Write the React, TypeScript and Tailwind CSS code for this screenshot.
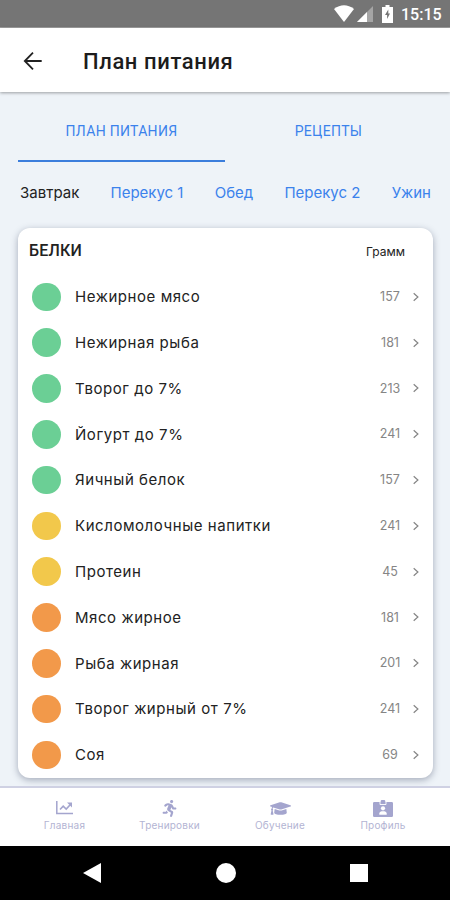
import type { ReactNode } from 'react'
import { FaGraduationCap, FaRunning } from 'react-icons/fa'

interface Food {
  name: string
  grams: number
  color: string
}

const GREEN = 'bg-[#6bcf95]'
const YELLOW = 'bg-[#f2c84b]'
const ORANGE = 'bg-[#f2994a]'

const foods: Food[] = [
  { name: 'Нежирное мясо', grams: 157, color: GREEN },
  { name: 'Нежирная рыба', grams: 181, color: GREEN },
  { name: 'Творог до 7%', grams: 213, color: GREEN },
  { name: 'Йогурт до 7%', grams: 241, color: GREEN },
  { name: 'Яичный белок', grams: 157, color: GREEN },
  { name: 'Кисломолочные напитки', grams: 241, color: YELLOW },
  { name: 'Протеин', grams: 45, color: YELLOW },
  { name: 'Мясо жирное', grams: 181, color: ORANGE },
  { name: 'Рыба жирная', grams: 201, color: ORANGE },
  { name: 'Творог жирный от 7%', grams: 241, color: ORANGE },
  { name: 'Соя', grams: 69, color: ORANGE },
]

const meals = ['Завтрак', 'Перекус 1', 'Обед', 'Перекус 2', 'Ужин']

const BackIcon = () => (
  <svg width="20" height="20" viewBox="0 0 20 20" fill="none">
    <path d="M18.7 10H2M10 1.7L1.800 10l8.200 8.300" stroke="#222" strokeWidth="1.8" />
  </svg>
)

const ChevronIcon = () => (
  <svg width="6" height="10" viewBox="0 0 6 10" fill="none">
    <path d="M.7 1.200l4.200 3.800-4.200 3.800" stroke="#858585" strokeWidth="1.2" />
  </svg>
)

const ChartIcon = () => (
  <svg width="17" height="14" viewBox="0 0 17 14" fill="none" stroke="currentColor">
    <path d="M.8 0v12.500H17" strokeWidth="1.5" />
    <path d="M4 8.500l3.200-3.300 3 2.800 4-4.300" strokeWidth="1.6" />
    <path d="M11 1.500h5v5z" fill="currentColor" stroke="none" />
  </svg>
)

const BadgeIcon = () => (
  <svg width="20" height="17" viewBox="0 0 20 17">
    <path d="M1.300 2H7.600a2.400 2.400 0 0 1 4.800 0h6.300Q20 2 20 3.300v12.400q0 1.300-1.300 1.300H1.300Q0 17 0 15.700V3.300Q0 2 1.300 2z" fill="currentColor" />
    <path d="M7 1.800v2.700h6V1.800" fill="none" stroke="#fff" strokeWidth=".9" />
    <circle cx="10" cy="8.300" r="2.100" fill="#fff" />
    <path d="M6.300 14.800v-1.300c0-1.800 1.700-2.300 3.700-2.300s3.700.5 3.700 2.300v1.300z" fill="#fff" />
  </svg>
)

function StatusBar() {
  return (
    <div className="flex h-7 shrink-0 items-center justify-end border-b border-[#a0a0a0] bg-[#757575] pr-2 text-white">
      <svg width="20" height="17" viewBox="0 0 20 17" fill="currentColor">
        <path d="M0 4Q10-3.500 20 4L10 17z" />
      </svg>
      <svg className="ml-[3px]" width="16" height="16" viewBox="0 0 16 16" fill="currentColor">
        <path d="M16 0v16H0z" opacity=".35" />
        <path d="M10 6v10H0z" />
      </svg>
      <svg className="ml-[9px]" width="11" height="18" viewBox="0 0 11 18">
        <path d="M3.500 0h4v2H11v16H0V2h3.500z" fill="currentColor" />
        <path d="M6.300 4.500L3 10h2.100v4L8 8.500H6.300z" fill="#757575" />
      </svg>
      <span className="ml-[8px] mt-[3px] w-[41px] whitespace-nowrap text-[16px] font-medium leading-5">15:15</span>
    </div>
  )
}

function FoodRow({ food }: { food: Food }) {
  return (
    <div className="flex h-[45.800px] items-center px-[14px]">
      <span className={`size-[28.500px] rounded-full ${food.color}`} />
      <span className="ml-[14.500px] flex-1 pt-px font-['Inter',sans-serif] text-[15px] tracking-[0.560px] text-[#222]">{food.name}</span>
      <span className="w-8 pt-px text-center font-['Inter',sans-serif] text-[12.500px] text-[#858585]">{food.grams}</span>
      <span className="ml-[7px]">
        <ChevronIcon />
      </span>
    </div>
  )
}

function NavItem({ label, width, children }: { label: string; width: string; children: ReactNode }) {
  return (
    <div className={`flex flex-col items-center ${width}`}>
      <span className="flex h-[18px] items-center">{children}</span>
      <span className="mt-[2px] font-['Inter',sans-serif] text-[10px] leading-[13px] tracking-[0.200px] text-[#b3b4d3]">{label}</span>
    </div>
  )
}

export default function App() {
  return (
    <div className="flex h-[900px] w-[450px] flex-col overflow-hidden bg-[#eef3f8] font-['Roboto',sans-serif]">
      <StatusBar />
      <header className="z-10 flex h-16 shrink-0 items-center bg-white pl-[23px] pt-[2px] shadow-[0_1px_3px_rgba(0,0,0,0.35)]">
        <BackIcon />
        <h1 className="ml-10 text-[22px] font-medium tracking-[0.600px] text-[#1c1c1c]">План питания</h1>
      </header>

      <main className="flex min-h-0 flex-1 flex-col px-[18px]">
        <div className="flex h-[70px] shrink-0 text-center text-[14px] tracking-[0.300px] text-[#3b82ec]">
          <div className="w-[208px] border-b-[2.500px] border-[#3b7edc] pt-[29px] leading-5">ПЛАН ПИТАНИЯ</div>
          <div className="w-[208px] pt-[29px] leading-5">РЕЦЕПТЫ</div>
        </div>
        <div className="flex h-[66px] shrink-0 justify-between pl-[2px] pr-[1px] pt-[21px] font-['Inter',sans-serif] text-[15px] leading-5 text-[#3b82ec]">
          {meals.map((meal, i) => (
            <span key={meal} className={i === 0 ? 'text-[#222]' : ''}>{meal}</span>
          ))}
        </div>

        <section className="h-[550px] w-[415px] shrink-0 rounded-[12px] bg-white shadow-[0_2px_7px_rgba(50,60,90,0.4)]">
          <div className="flex h-[46px] items-center justify-between pl-[11px] pr-[28px] text-[#222]">
            <h2 className="text-[16px] font-medium tracking-[0.200px]">БЕЛКИ</h2>
            <span className="pt-px font-['Inter',sans-serif] text-[12px]">Грамм</span>
          </div>
          {foods.map(food => (
            <FoodRow key={food.name} food={food} />
          ))}
        </section>
      </main>

      <nav className="z-10 flex h-[60px] shrink-0 border-t-2 border-[#cfd1e3] bg-white pl-[14px] pt-[11px] text-[#a4a5ce]">
        <NavItem label="Главная" width="w-[101px]"><ChartIcon /></NavItem>
        <NavItem label="Тренировки" width="w-[109px]"><FaRunning size={17} /></NavItem>
        <NavItem label="Обучение" width="w-[112px]"><FaGraduationCap size={21} /></NavItem>
        <NavItem label="Профиль" width="w-[94px]"><BadgeIcon /></NavItem>
      </nav>

      <footer className="flex h-[54px] shrink-0 items-center justify-between bg-black pl-[83px] pr-[82px]">
        <svg width="18" height="20" viewBox="0 0 18 20" fill="#fff">
          <path d="M18 0v20L0 10z" />
        </svg>
        <span className="size-5 rounded-full bg-white" />
        <span className="size-[18px] bg-white" />
      </footer>
    </div>
  )
}
